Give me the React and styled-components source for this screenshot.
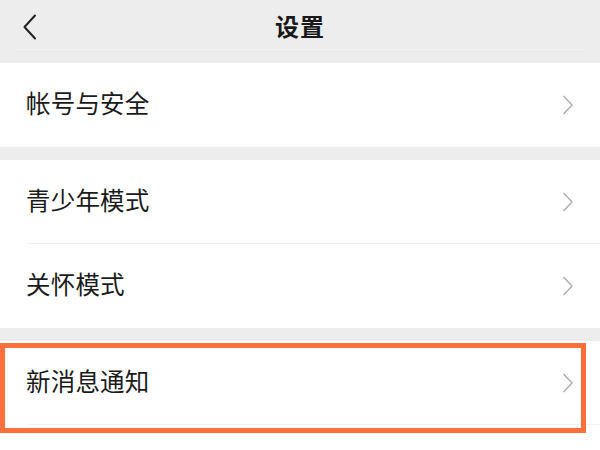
import React from "react";
import styled, { createGlobalStyle } from "styled-components";

const Global = createGlobalStyle`
  html, body { margin: 0; padding: 0; background: #ededed; }
  body { font-family: "Noto Sans CJK SC", "Noto Sans", sans-serif; }
  * { box-sizing: border-box; }
`;

const Page = styled.div`
  position: relative;
  width: 600px;
  height: 450px;
  overflow: hidden;
  background: #ededed;
  display: flex;
  flex-direction: column;
`;

const Header = styled.header`
  height: 50px;
  flex: none;
  position: relative;
  display: flex;
  align-items: center;
  justify-content: center;
  margin: 0 14px;
  border-bottom: 1px solid #f3f3f3;
`;

const Back = styled.button`
  position: absolute;
  left: 8px;
  top: 14px;
  width: 16px;
  height: 26px;
  padding: 0;
  border: none;
  background: none;
  display: flex;
`;

const Title = styled.h1`
  margin: 0;
  font-size: 24px;
  font-weight: 600;
  color: #191919;
  letter-spacing: 1px;
  line-height: 26px;
  padding-top: 2px;
`;

const Group = styled.section`
  background: #fff;
  margin-top: ${(p) => p.$gap}px;
  flex: ${(p) => (p.$fill ? 1 : "none")};
`;

const Row = styled.div`
  height: 84px;
  display: flex;
  align-items: center;
  justify-content: space-between;
  padding: 0 26px 0 26px;
  position: relative;
  &::after {
    content: "";
    display: ${(p) => (p.$divider ? "block" : "none")};
    position: absolute;
    left: 27px;
    right: 0;
    bottom: 0;
    height: 1px;
    background: #f0f0f0;
  }
`;

const Label = styled.span`
  font-size: 24.5px;
  color: #1b1b1b;
  letter-spacing: 0.2px;
  line-height: 1;
  padding-bottom: 4px;
`;

const Highlight = styled.div`
  position: absolute;
  left: 0;
  top: 343px;
  width: 586px;
  height: 90px;
  border: 5px solid #fe6f3e;
  pointer-events: none;
`;

const Chevron = () => (
  <svg width="12" height="20" viewBox="0 0 12 20" fill="none">
    <path d="M2 1.5 L10 10 L2 18.5" stroke="#b3b3b3" strokeWidth="1.7" strokeLinecap="round" strokeLinejoin="round" />
  </svg>
);

const BackIcon = () => (
  <svg width="16" height="26" viewBox="0 0 16 26" fill="none">
    <path d="M13 1.5 L2.5 13 L13 24.5" stroke="#222" strokeWidth="2" strokeLinecap="round" strokeLinejoin="round" />
  </svg>
);

const groups = [
  { gap: 13, items: ["帐号与安全"] },
  { gap: 13, items: ["青少年模式", "关怀模式"] },
  { gap: 13, items: ["新消息通知"], trailingDivider: true, fill: true },
];

export default function App() {
  return (
    <>
      <Global />
      <Page>
        <Header>
          <Back aria-label="返回">
            <BackIcon />
          </Back>
          <Title>设置</Title>
        </Header>
        {groups.map((g, i) => (
          <Group key={i} $gap={g.gap} $fill={g.fill}>
            {g.items.map((t, j) => (
              <Row key={t} $divider={j < g.items.length - 1 || g.trailingDivider}>
                <Label>{t}</Label>
                <Chevron />
              </Row>
            ))}
          </Group>
        ))}
        <Highlight />
      </Page>
    </>
  );
}
